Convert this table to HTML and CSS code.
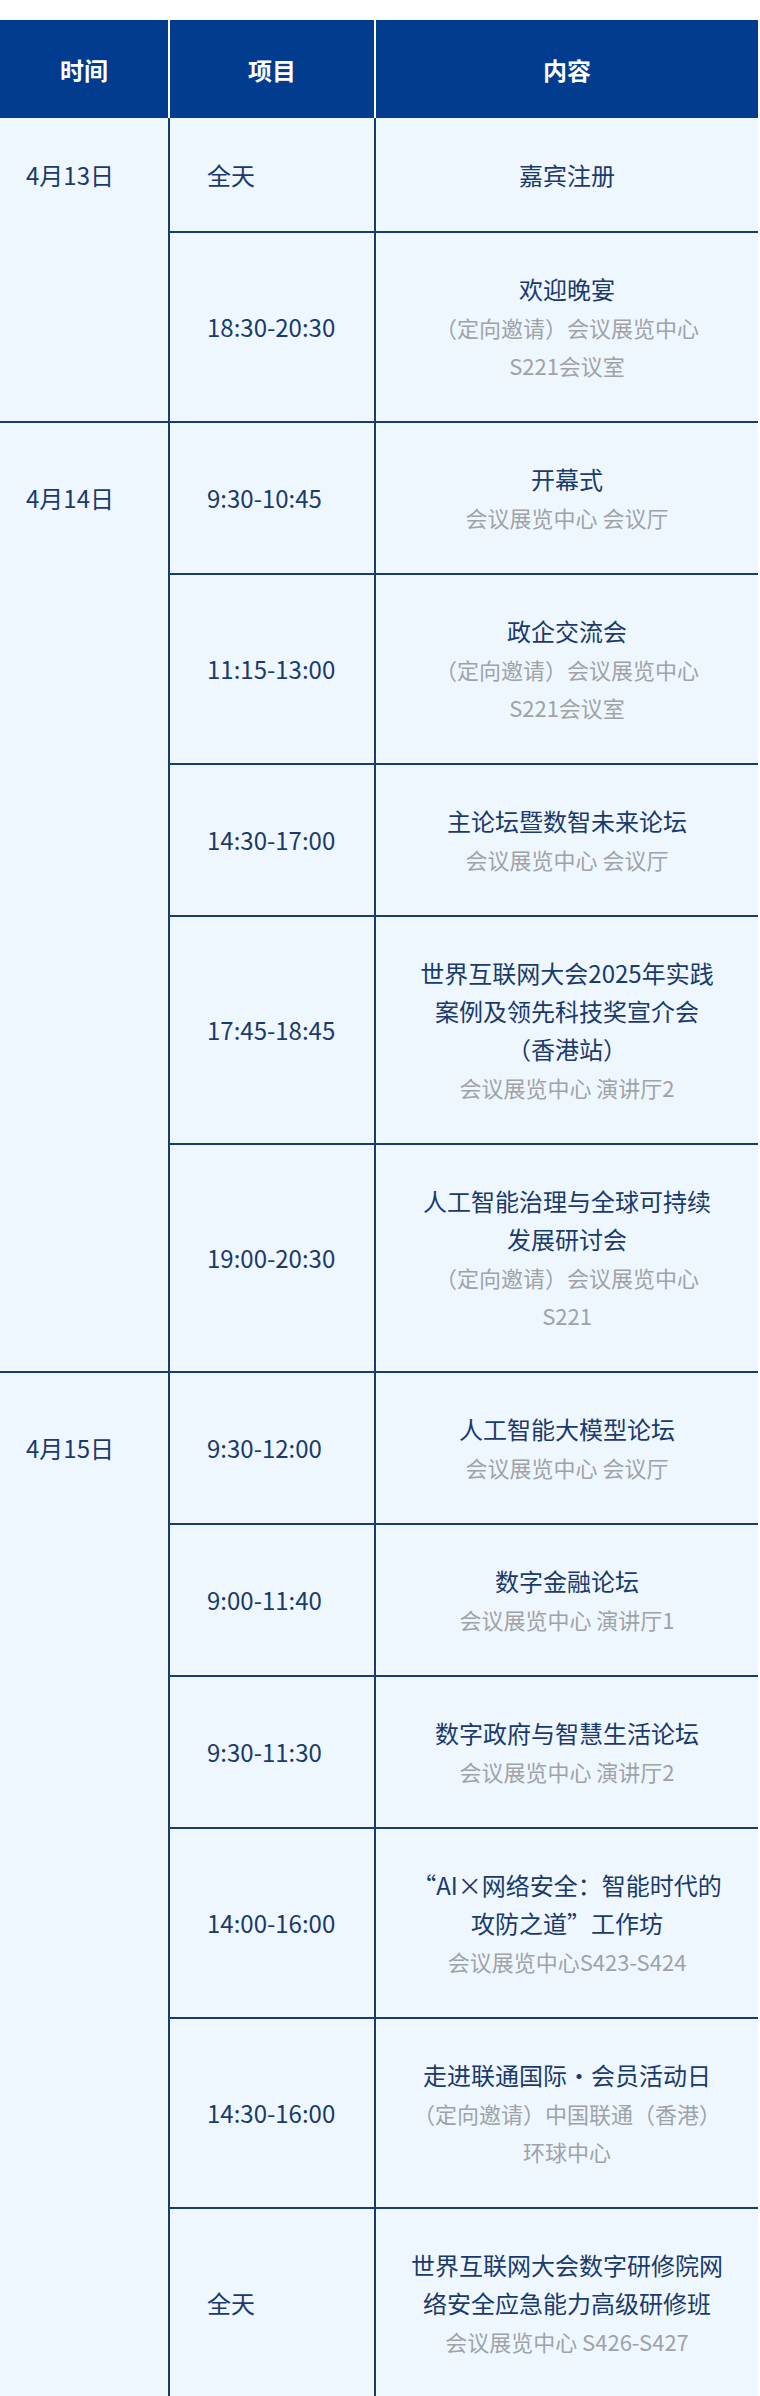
FILE: index.html
```html
<!DOCTYPE html>
<html lang="zh-CN">
<head>
<meta charset="utf-8">
<title>日程</title>
<link rel="stylesheet" href="styles.css">
</head>
<body>
<div class="schedule">
  <div class="head">
    <div class="hcell">时间</div>
    <div class="hcell sep">项目</div>
    <div class="hcell sep">内容</div>
  </div>

  <div class="group first">
    <div class="date">4月13日</div>
    <div class="time r1">全天</div>
    <div class="content r1"><div class="title">嘉宾注册</div></div>
    <div class="time top">18:30-20:30</div>
    <div class="content top"><div class="title">欢迎晚宴</div><div class="sub">（定向邀请）会议展览中心<br>S221会议室</div></div>
  </div>

  <div class="group">
    <div class="date">4月14日</div>
    <div class="time">9:30-10:45</div>
    <div class="content"><div class="title">开幕式</div><div class="sub">会议展览中心 会议厅</div></div>
    <div class="time top">11:15-13:00</div>
    <div class="content top"><div class="title">政企交流会</div><div class="sub">（定向邀请）会议展览中心<br>S221会议室</div></div>
    <div class="time top">14:30-17:00</div>
    <div class="content top"><div class="title">主论坛暨数智未来论坛</div><div class="sub">会议展览中心 会议厅</div></div>
    <div class="time top">17:45-18:45</div>
    <div class="content top"><div class="title">世界互联网大会2025年实践<br>案例及领先科技奖宣介会<br>（香港站）</div><div class="sub">会议展览中心 演讲厅2</div></div>
    <div class="time top">19:00-20:30</div>
    <div class="content top"><div class="title">人工智能治理与全球可持续<br>发展研讨会</div><div class="sub">（定向邀请）会议展览中心<br>S221</div></div>
  </div>

  <div class="group">
    <div class="date">4月15日</div>
    <div class="time">9:30-12:00</div>
    <div class="content"><div class="title">人工智能大模型论坛</div><div class="sub">会议展览中心 会议厅</div></div>
    <div class="time top">9:00-11:40</div>
    <div class="content top"><div class="title">数字金融论坛</div><div class="sub">会议展览中心 演讲厅1</div></div>
    <div class="time top">9:30-11:30</div>
    <div class="content top"><div class="title">数字政府与智慧生活论坛</div><div class="sub">会议展览中心 演讲厅2</div></div>
    <div class="time top">14:00-16:00</div>
    <div class="content top"><div class="title">“AI×网络安全：智能时代的<br>攻防之道”工作坊</div><div class="sub">会议展览中心S423-S424</div></div>
    <div class="time top">14:30-16:00</div>
    <div class="content top"><div class="title">走进联通国际・会员活动日</div><div class="sub">（定向邀请）中国联通（香港）<br>环球中心</div></div>
    <div class="time top">全天</div>
    <div class="content top"><div class="title">世界互联网大会数字研修院网<br>络安全应急能力高级研修班</div><div class="sub">会议展览中心 S426-S427</div></div>
  </div>
</div>
</body>
</html>
```

FILE: styles.css
```css
html, body {
  margin: 0;
  padding: 0;
  background: #ffffff;
}

body {
  font-family: "Noto Sans CJK SC", "Noto Sans", sans-serif;
  color: #1b3a6c;
}

.schedule {
  width: 758px;
  margin-top: 20px;
  background: #eef7fd;
}

.head {
  display: grid;
  grid-template-columns: 168px 206px 1fr;
  height: 98px;
  background: #023c8e;
}

.hcell {
  display: flex;
  align-items: center;
  justify-content: center;
  color: #ffffff;
  font-size: 24px;
  font-weight: 700;
}

.hcell.sep {
  border-left: 2px solid #ffffff;
}

.group {
  display: grid;
  grid-template-columns: 168px 206px 1fr;
  border-top: 2px solid #173d6e;
}

.group.first {
  border-top: 0;
}

.date {
  grid-column: 1;
  grid-row: 1;
  align-self: center;
  padding-left: 26px;
  font-size: 24px;
  line-height: 38px;
}

.time {
  grid-column: 2;
  display: flex;
  align-items: center;
  border-left: 2px solid #173d6e;
  padding: 37px 0 37px 37px;
  font-size: 24px;
  line-height: 38px;
}

.content {
  grid-column: 3;
  border-left: 2px solid #173d6e;
  padding: 37px 8px;
  text-align: center;
  display: flex;
  flex-direction: column;
  justify-content: center;
}

.time.r1,
.content.r1 {
  padding-top: 37.5px;
  padding-bottom: 37.5px;
}

.time.top,
.content.top {
  border-top: 2px solid #173d6e;
}

.title {
  font-size: 24px;
  line-height: 38px;
  white-space: nowrap;
}

.sub {
  font-size: 22px;
  line-height: 38px;
  color: #9fa3a8;
  white-space: nowrap;
}
```
